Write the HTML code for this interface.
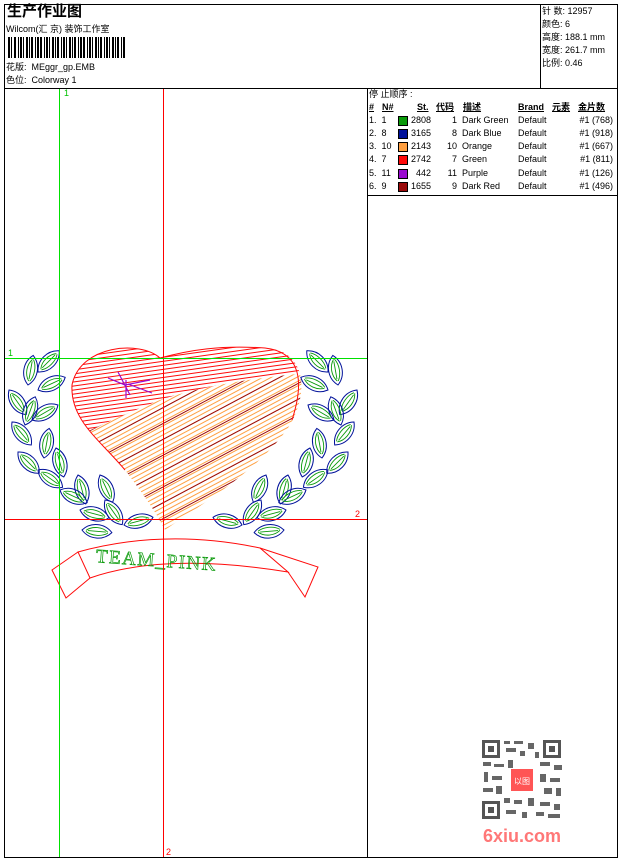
<!DOCTYPE html>
<html><head><meta charset="utf-8"><style>
*{margin:0;padding:0}
body{width:620px;height:860px;background:#fff;position:relative;overflow:hidden;font-family:"Liberation Sans","Noto Sans CJK SC",sans-serif;font-size:9px;color:#000}
.a{position:absolute;white-space:nowrap;line-height:11px}
.l{position:absolute;background:#000}
.sw{position:absolute;width:10px;height:10px;border:1px solid #000;box-sizing:border-box}
.r{text-align:right}
.u{text-decoration:underline;font-weight:bold}
</style></head><body>
<div class="l" style="left:4px;top:4px;width:614px;height:1px"></div>
<div class="l" style="left:4px;top:857px;width:614px;height:1px"></div>
<div class="l" style="left:4px;top:4px;width:1px;height:854px"></div>
<div class="l" style="left:617px;top:4px;width:1px;height:854px"></div>
<div class="l" style="left:4px;top:88px;width:614px;height:1px"></div>
<div class="l" style="left:540px;top:4px;width:1px;height:84px"></div>
<div class="l" style="left:367px;top:88px;width:1px;height:770px"></div>
<div class="l" style="left:367px;top:195px;width:251px;height:1px"></div>

<div class="a" style="left:7px;top:4px;font-size:15px;font-weight:bold;line-height:16px">生产作业图</div>
<div class="a" style="left:6px;top:24px">Wilcom(汇 京) 装饰工作室</div>
<svg style="position:absolute;left:8px;top:37px" width="120" height="21">
<g fill="#000">
<rect x="0" width="2" height="21"/><rect x="3" width="1" height="21"/><rect x="6" width="2" height="21"/><rect x="10" width="1" height="21"/><rect x="12" width="2" height="21"/><rect x="15" width="1" height="21"/><rect x="18" width="2" height="21"/><rect x="21" width="1" height="21"/><rect x="23" width="2" height="21"/><rect x="27" width="1" height="21"/><rect x="29" width="2" height="21"/><rect x="32" width="2" height="21"/><rect x="36" width="1" height="21"/><rect x="38" width="2" height="21"/><rect x="41" width="1" height="21"/><rect x="44" width="2" height="21"/><rect x="47" width="1" height="21"/><rect x="49" width="2" height="21"/><rect x="53" width="1" height="21"/><rect x="55" width="2" height="21"/><rect x="58" width="1" height="21"/><rect x="61" width="2" height="21"/><rect x="64" width="1" height="21"/><rect x="66" width="2" height="21"/><rect x="70" width="1" height="21"/><rect x="72" width="2" height="21"/><rect x="75" width="2" height="21"/><rect x="79" width="1" height="21"/><rect x="81" width="2" height="21"/><rect x="84" width="1" height="21"/><rect x="87" width="2" height="21"/><rect x="90" width="1" height="21"/><rect x="92" width="2" height="21"/><rect x="96" width="1" height="21"/><rect x="98" width="2" height="21"/><rect x="101" width="1" height="21"/><rect x="104" width="2" height="21"/><rect x="107" width="1" height="21"/><rect x="109" width="2" height="21"/><rect x="113" width="1" height="21"/><rect x="115" width="2" height="21"/>
</g></svg>
<div class="a" style="left:6px;top:62px">花版:&nbsp; MEggr_gp.EMB</div>
<div class="a" style="left:6px;top:75px">色位:&nbsp; Colorway 1</div>

<div class="a" style="left:542px;top:6px">针 数: 12957</div>
<div class="a" style="left:542px;top:19px">颜色: 6</div>
<div class="a" style="left:542px;top:32px">高度: 188.1 mm</div>
<div class="a" style="left:542px;top:45px">宽度: 261.7 mm</div>
<div class="a" style="left:542px;top:58px">比例: 0.46</div>

<div class="a" style="left:369px;top:89px">停 止顺序 :</div>
<div class="a u" style="left:369px;top:102px">#</div>
<div class="a u" style="left:382px;top:102px">N#</div>
<div class="a u" style="left:417px;top:102px">St.</div>
<div class="a u" style="left:436px;top:102px">代码</div>
<div class="a u" style="left:463px;top:102px">描述</div>
<div class="a u" style="left:518px;top:102px">Brand</div>
<div class="a u" style="left:552px;top:102px">元素</div>
<div class="a u" style="left:578px;top:102px">金片数</div>

<div style="position:absolute;left:0;top:115px">
<div class="a" style="left:369px;top:0">1.&nbsp; 1</div><div class="sw" style="left:398px;top:1px;background:#0a9a0a"></div><div class="a r" style="left:405px;width:26px;top:0">2808</div><div class="a r" style="left:437px;width:20px;top:0">1</div><div class="a" style="left:462px;top:0">Dark Green</div><div class="a" style="left:518px;top:0">Default</div><div class="a r" style="left:560px;width:53px;top:0">#1 (768)</div>
</div>
<div style="position:absolute;left:0;top:128px">
<div class="a" style="left:369px;top:0">2.&nbsp; 8</div><div class="sw" style="left:398px;top:1px;background:#00119a"></div><div class="a r" style="left:405px;width:26px;top:0">3165</div><div class="a r" style="left:437px;width:20px;top:0">8</div><div class="a" style="left:462px;top:0">Dark Blue</div><div class="a" style="left:518px;top:0">Default</div><div class="a r" style="left:560px;width:53px;top:0">#1 (918)</div>
</div>
<div style="position:absolute;left:0;top:141px">
<div class="a" style="left:369px;top:0">3.&nbsp; 10</div><div class="sw" style="left:398px;top:1px;background:#ff9f40"></div><div class="a r" style="left:405px;width:26px;top:0">2143</div><div class="a r" style="left:437px;width:20px;top:0">10</div><div class="a" style="left:462px;top:0">Orange</div><div class="a" style="left:518px;top:0">Default</div><div class="a r" style="left:560px;width:53px;top:0">#1 (667)</div>
</div>
<div style="position:absolute;left:0;top:154px">
<div class="a" style="left:369px;top:0">4.&nbsp; 7</div><div class="sw" style="left:398px;top:1px;background:#ff0a0a"></div><div class="a r" style="left:405px;width:26px;top:0">2742</div><div class="a r" style="left:437px;width:20px;top:0">7</div><div class="a" style="left:462px;top:0">Green</div><div class="a" style="left:518px;top:0">Default</div><div class="a r" style="left:560px;width:53px;top:0">#1 (811)</div>
</div>
<div style="position:absolute;left:0;top:168px">
<div class="a" style="left:369px;top:0">5.&nbsp; 11</div><div class="sw" style="left:398px;top:1px;background:#9a0ad0"></div><div class="a r" style="left:405px;width:26px;top:0">442</div><div class="a r" style="left:437px;width:20px;top:0">11</div><div class="a" style="left:462px;top:0">Purple</div><div class="a" style="left:518px;top:0">Default</div><div class="a r" style="left:560px;width:53px;top:0">#1 (126)</div>
</div>
<div style="position:absolute;left:0;top:181px">
<div class="a" style="left:369px;top:0">6.&nbsp; 9</div><div class="sw" style="left:398px;top:1px;background:#990a0a"></div><div class="a r" style="left:405px;width:26px;top:0">1655</div><div class="a r" style="left:437px;width:20px;top:0">9</div><div class="a" style="left:462px;top:0">Dark Red</div><div class="a" style="left:518px;top:0">Default</div><div class="a r" style="left:560px;width:53px;top:0">#1 (496)</div>
</div>

<svg style="position:absolute;left:0;top:0" width="367" height="858">
<defs>
<clipPath id="h"><path d="M160,358 C140,340 80,345 72,385 C70,420 100,440 125,470 C140,490 155,510 165,530 C200,505 260,470 290,425 C310,390 305,350 265,348 C220,345 190,350 160,358Z"/></clipPath>
<pattern id="po" width="4" height="4" patternUnits="userSpaceOnUse" patternTransform="rotate(-28)"><rect width="4" height="1" fill="#ff9f40"/></pattern>
<pattern id="pd" width="14" height="14" patternUnits="userSpaceOnUse" patternTransform="rotate(-28)"><rect y="2" width="14" height="1" fill="#990a0a"/></pattern>
<pattern id="pr" width="4" height="4" patternUnits="userSpaceOnUse" patternTransform="rotate(-8)"><rect width="4" height="1" fill="#ff0a0a"/></pattern>
<g id="lf"><path d="M0,0 C8,-9 22,-9 30,0 C22,9 8,9 0,0Z" fill="none" stroke="#00119a" stroke-width="1"/><path d="M4,0 C10,-5 20,-5 26,0 M4,1 C10,5 20,5 26,1 M6,0 H24" fill="none" stroke="#0a9a0a" stroke-width="0.9"/></g>
</defs>
<g clip-path="url(#h)">
<rect x="60" y="340" width="260" height="200" fill="url(#po)"/>
<rect x="60" y="340" width="260" height="200" fill="url(#pd)"/>
<path d="M60,340 H320 V372 Q220,380 160,400 Q110,420 70,440 Z" fill="#fff"/>
<path d="M60,340 H320 V372 Q220,380 160,400 Q110,420 70,440 Z" fill="url(#pr)"/>
</g>
<path d="M160,358 C140,340 80,345 72,385 C70,420 100,440 125,470 M160,358 C190,350 220,345 265,348 C300,352 305,380 292,420" fill="none" stroke="#ff0a0a" stroke-width="1"/>
<path d="M108,378 L125,385 L150,380 M118,372 L130,395 M128,384 L152,393 M126,380 L126,398" fill="none" stroke="#9a0ad0" stroke-width="1.2"/>
<use href="#lf" transform="translate(38,372) rotate(-45)"/>
<use href="#lf" transform="translate(28,385) rotate(-80)"/>
<use href="#lf" transform="translate(38,390) rotate(-25)"/>
<use href="#lf" transform="translate(9,390) rotate(55)"/>
<use href="#lf" transform="translate(25,425) rotate(-70)"/>
<use href="#lf" transform="translate(32,420) rotate(-30)"/>
<use href="#lf" transform="translate(12,422) rotate(50)"/>
<use href="#lf" transform="translate(44,458) rotate(-80)"/>
<use href="#lf" transform="translate(18,452) rotate(45)"/>
<use href="#lf" transform="translate(56,448) rotate(75)"/>
<use href="#lf" transform="translate(38,470) rotate(35)"/>
<use href="#lf" transform="translate(78,475) rotate(75)"/>
<use href="#lf" transform="translate(60,490) rotate(25)"/>
<use href="#lf" transform="translate(100,475) rotate(65)"/>
<use href="#lf" transform="translate(80,510) rotate(15)"/>
<use href="#lf" transform="translate(105,500) rotate(55)"/>
<use href="#lf" transform="translate(82,530) rotate(5)"/>
<use href="#lf" transform="translate(124,525) rotate(-15)"/>
<use href="#lf" transform="translate(328,372) rotate(225)"/>
<use href="#lf" transform="translate(338,385) rotate(260)"/>
<use href="#lf" transform="translate(328,390) rotate(205)"/>
<use href="#lf" transform="translate(357,390) rotate(125)"/>
<use href="#lf" transform="translate(341,425) rotate(250)"/>
<use href="#lf" transform="translate(334,420) rotate(210)"/>
<use href="#lf" transform="translate(354,422) rotate(130)"/>
<use href="#lf" transform="translate(322,458) rotate(260)"/>
<use href="#lf" transform="translate(348,452) rotate(135)"/>
<use href="#lf" transform="translate(310,448) rotate(105)"/>
<use href="#lf" transform="translate(328,470) rotate(145)"/>
<use href="#lf" transform="translate(288,475) rotate(105)"/>
<use href="#lf" transform="translate(306,490) rotate(155)"/>
<use href="#lf" transform="translate(266,475) rotate(115)"/>
<use href="#lf" transform="translate(286,510) rotate(165)"/>
<use href="#lf" transform="translate(261,500) rotate(125)"/>
<use href="#lf" transform="translate(284,530) rotate(175)"/>
<use href="#lf" transform="translate(242,525) rotate(195)"/>
<g fill="none" stroke="#ff0a0a" stroke-width="1">
<path d="M78,552 Q165,528 260,548 L288,572 Q165,552 90,578 Z"/>
<path d="M78,552 L52,570 L66,598 L90,578"/>
<path d="M260,548 L318,567 L305,597 L288,572"/>
</g>
<text x="96" y="568" font-family="Liberation Serif,serif" font-size="19" fill="none" stroke="#0a9a0a" stroke-width="0.7" letter-spacing="1.5" transform="rotate(4 180 560)">TEAM_PINK</text>
</svg>
<div style="position:absolute;left:59px;top:89px;width:1px;height:768px;background:#00e000"></div>
<div style="position:absolute;left:163px;top:89px;width:1px;height:768px;background:#ff0000"></div>
<div style="position:absolute;left:5px;top:358px;width:362px;height:1px;background:#00e000"></div>
<div style="position:absolute;left:5px;top:519px;width:362px;height:1px;background:#ff0000"></div>
<div class="a" style="left:64px;top:88px;color:#00c000">1</div>
<div class="a" style="left:8px;top:348px;color:#00c000">1</div>
<div class="a" style="left:355px;top:509px;color:#ff0000">2</div>
<div class="a" style="left:166px;top:847px;color:#ff0000">2</div>

<svg style="position:absolute;left:480px;top:738px" width="90" height="115">
<g fill="#555">
<rect x="2" y="2" width="18" height="18"/><rect x="63" y="2" width="18" height="18"/><rect x="2" y="63" width="18" height="18"/>
</g>
<g fill="#fff"><rect x="5" y="5" width="12" height="12"/><rect x="66" y="5" width="12" height="12"/><rect x="5" y="66" width="12" height="12"/></g>
<g fill="#555"><rect x="8" y="8" width="6" height="6"/><rect x="69" y="8" width="6" height="6"/><rect x="8" y="69" width="6" height="6"/></g>
<g fill="#666">
<rect x="24" y="3" width="6" height="3"/><rect x="34" y="3" width="9" height="3"/><rect x="48" y="5" width="6" height="6"/><rect x="26" y="10" width="10" height="4"/><rect x="40" y="13" width="5" height="5"/><rect x="55" y="14" width="4" height="6"/>
<rect x="3" y="24" width="8" height="4"/><rect x="14" y="26" width="10" height="3"/><rect x="28" y="22" width="5" height="8"/><rect x="60" y="24" width="10" height="4"/><rect x="74" y="27" width="8" height="5"/>
<rect x="4" y="34" width="4" height="10"/><rect x="12" y="38" width="10" height="4"/><rect x="60" y="36" width="6" height="8"/><rect x="70" y="40" width="10" height="4"/>
<rect x="3" y="50" width="10" height="4"/><rect x="16" y="48" width="6" height="8"/><rect x="64" y="50" width="8" height="6"/><rect x="76" y="50" width="5" height="8"/>
<rect x="24" y="60" width="6" height="5"/><rect x="34" y="62" width="8" height="4"/><rect x="48" y="60" width="6" height="8"/><rect x="60" y="64" width="10" height="4"/><rect x="74" y="66" width="6" height="6"/>
<rect x="26" y="72" width="10" height="4"/><rect x="42" y="74" width="5" height="6"/><rect x="56" y="74" width="8" height="4"/><rect x="68" y="76" width="12" height="4"/>
</g>
<rect x="31" y="31" width="22" height="22" fill="#f55"/>
<text x="42" y="46" font-size="8" fill="#fff" text-anchor="middle" font-family="Noto Sans CJK SC,sans-serif">以图</text>
<text x="42" y="104" font-size="18" font-weight="bold" fill="#f77" text-anchor="middle" font-family="Liberation Sans,sans-serif">6xiu.com</text>
</svg>
</body></html>
